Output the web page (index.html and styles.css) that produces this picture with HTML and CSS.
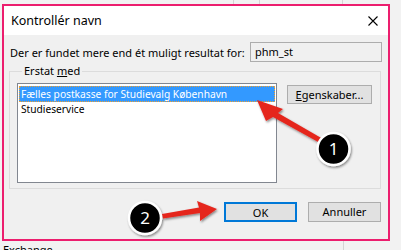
FILE: index.html
```html
<!DOCTYPE html>
<html lang="da">
<head>
<meta charset="utf-8">
<title>Kontrollér navn</title>
<link rel="stylesheet" href="styles.css">
</head>
<body>
<div class="desktop">
  <div class="bg-lines">
    <span class="vline l1"></span><span class="vline l2"></span><span class="vline l3"></span><span class="vline l4"></span>
  </div>
  <div class="dialog">
    <div class="titlebar">
      <span class="title">Kontrollér navn</span>
      <svg class="close" width="10" height="10" viewBox="0 0 10 10"><path d="M0.5 0.5 L9.5 9.5 M9.5 0.5 L0.5 9.5" stroke="#000" stroke-width="1.1" fill="none"/></svg>
    </div>
    <div class="body">
      <div class="row-found">
        <span>Der er fundet mere end ét muligt resultat for:</span>
        <div class="field">phm_st</div>
      </div>
      <fieldset class="group">
        <legend>Erstat <u>m</u>ed</legend>
        <div class="group-inner">
          <div class="listbox">
            <div class="item selected">Fælles postkasse for Studievalg København</div>
            <div class="item">Studieservice</div>
          </div>
          <button class="btn btn-props"><u>E</u>genskaber...</button>
        </div>
      </fieldset>
      <div class="actions">
        <button class="btn btn-default">OK</button>
        <button class="btn">Annuller</button>
      </div>
    </div>
  </div>
  <div class="below">Exchange</div>
  <svg class="annotations" width="401" height="250" viewBox="0 0 401 250">
    <defs>
      <filter id="sh" x="-20%" y="-20%" width="140%" height="140%">
        <feDropShadow dx="1" dy="1.5" stdDeviation="1.2" flood-color="#000" flood-opacity="0.45"/>
      </filter>
    </defs>
    <g filter="url(#sh)">
      <polygon fill="#e5261f" points="257,100 283,109 278,113 323,139 320,143 273,117 266,121"/>
      <polygon fill="#e5261f" points="217,209 197,201 199,207.5 162,214 163,218.5 200,213 200,221"/>
      <circle cx="333.5" cy="149" r="16" fill="#000" stroke="#fff" stroke-width="2.5"/>
      <circle cx="145" cy="218" r="16" fill="#000" stroke="#fff" stroke-width="2.5"/>
    </g>
    <text x="333.5" y="155" class="num">1</text>
    <text x="145" y="224" class="num">2</text>
  </svg>
</div>
</body>
</html>
```

FILE: styles.css
```css
* { box-sizing: border-box; }
html, body { margin: 0; padding: 0; }
body {
  font-family: "Noto Sans", "DejaVu Sans", sans-serif;
  font-size: 11px;
  color: #000;
}
.desktop {
  position: relative;
  width: 401px;
  height: 250px;
  overflow: hidden;
  background: #f2f2f2;
  padding: 4px 0 0 2px;
}
.bg-lines { position: absolute; inset: 0; }
.vline { position: absolute; width: 1px; background: #d4d4d4; }
.l1 { left: 233px; top: 0; height: 4px; }
.l2 { left: 259px; top: 0; height: 4px; }
.l3 { left: 342px; top: 0; height: 4px; }
.l4 { left: 343px; top: 241px; height: 9px; }

.dialog {
  position: relative;
  width: 388px;
  height: 237px;
  border: 2px solid #ec1e6e;
  background: #f0f0f0;
  display: flex;
  flex-direction: column;
}
.titlebar {
  height: 29px;
  background: #fff;
  display: flex;
  align-items: center;
  justify-content: space-between;
  padding: 0 10px 0 7px;
  flex: none;
}
.title { font-size: 12.5px; }
.close { display: block; }

.body {
  padding: 7px 6px 0 6px;
  display: flex;
  flex-direction: column;
}
.row-found {
  display: flex;
  align-items: center;
  justify-content: space-between;
  height: 20px;
  white-space: nowrap;
}
.field {
  width: 132px;
  height: 20px;
  border: 1px solid #adadad;
  background: #f0f0f0;
  padding: 0 4px;
  line-height: 18px;
}
.group {
  margin: 1px 1px 0 -1px;
  padding: 0 7px 5px 7px;
  border: 1px solid #dcdcdc;
  min-width: 0;
}
.group legend {
  padding: 0 2px;
  margin-left: 5px;
  line-height: 16px;
}
.group-inner {
  display: flex;
  align-items: flex-start;
  gap: 10px;
  padding-top: 4px;
}
.listbox {
  width: 260px;
  height: 100px;
  border: 1px solid #828790;
  background: #fff;
  padding: 2px 1px;
}
.item {
  height: 16px;
  line-height: 14px;
  padding: 0 2px;
  white-space: nowrap;
  font-size: 10.2px;
}
.item.selected {
  background: #3399ff;
  color: #fff;
  border: 1px dotted #f0a030;
  padding: 0 1px;
}
.btn {
  font-family: inherit;
  font-size: 11px;
  color: #000;
  background: #e1e1e1;
  border: 1px solid #adadad;
  border-radius: 0;
  padding: 0;
  height: 20px;
  width: 73px;
  line-height: 18px;
}
.btn-props { width: 85px; height: 19px; margin-top: 2px; }
.btn-default { border: 2px solid #0078d7; }
.actions {
  display: flex;
  justify-content: flex-end;
  gap: 11px;
  margin-top: 13px;
  padding-right: 1px;
}
.below {
  padding: 2px 0 0 1px;
  line-height: 14px;
  font-size: 11px;
}
.annotations {
  position: absolute;
  left: 0;
  top: 0;
  pointer-events: none;
}
.num {
  fill: #fff;
  font-family: "Noto Sans", "DejaVu Sans", sans-serif;
  font-size: 17px;
  text-anchor: middle;
}
```
